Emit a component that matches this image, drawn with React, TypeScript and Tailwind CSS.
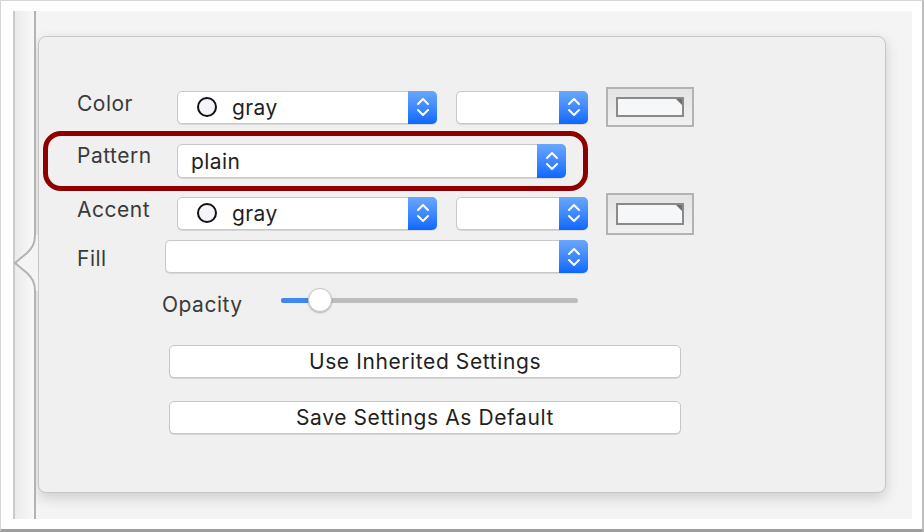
function Chevrons() {
  return (
    <svg width="14" height="22" viewBox="0 0 14 22" fill="none" stroke="white" strokeWidth="2" strokeLinecap="round" strokeLinejoin="round">
      <path d="M2 8 L7 3 L12 8" />
      <path d="M2 14 L7 19 L12 14" />
    </svg>
  )
}

function PopUp({ className, children }: { className: string; children?: React.ReactNode }) {
  return (
    <div className={"flex items-stretch rounded-[5px] border border-[#c8c8c8] bg-white shadow-[0_1px_0_rgba(0,0,0,0.1)] " + className}>
      <div className="flex flex-1 items-center text-[21px] tracking-[0.4px] text-[#1f1f1f]">{children}</div>
      <div className="-my-px -mr-px flex w-[29px] items-center justify-center rounded-r-[5px] bg-linear-to-b from-[#69a7fd] to-[#0a67fe]">
        <Chevrons />
      </div>
    </div>
  )
}

function GraySwatch() {
  return (
    <>
      <span className="ml-[19px] h-[20px] w-[20px] shrink-0 rounded-full border-2 border-[#111] bg-[#f3f5f8]" />
      <span className="ml-[15px] leading-none">gray</span>
    </>
  )
}

function ColorWell({ tall }: { tall?: boolean }) {
  return (
    <div
      className={
        tall
          ? "ml-[18px] flex h-[42px] w-[88px] items-center justify-center border-2 border-[#b3b3b3] bg-linear-to-b from-[#e4e4e4] to-[#f0f0f0]"
          : "ml-[18px] flex h-[40px] w-[88px] items-center justify-center border-2 border-[#b3b3b3] bg-linear-to-b from-[#e4e4e4] to-[#f0f0f0]"
      }
    >
      <div className={tall ? "relative h-[22px] w-[68px] border-2 border-[#8a8a8a] bg-[#f6f7f9]" : "relative h-[20px] w-[68px] border-2 border-[#8a8a8a] bg-[#f6f7f9]"}>
        <svg className="absolute right-0 top-0" width="6" height="6" viewBox="0 0 6 6">
          <path d="M0 0 L6 0 L6 6 Z" fill="#6f6f6f" />
        </svg>
      </div>
    </div>
  )
}

function PushButton({ label }: { label: string }) {
  return (
    <div className="ml-[130px] flex h-[33px] w-[512px] items-center justify-center rounded-[5px] border border-[#c6c6c6] bg-white text-[21px] tracking-[0.6px] text-[#1f1f1f] shadow-[0_1px_0_rgba(0,0,0,0.1)]">
      {label}
    </div>
  )
}

export default function App() {
  return (
    <div className="h-[532px] w-[924px] overflow-hidden border-t border-r-2 border-b-[3px] border-l border-t-[#d6d6d6] border-r-[#bdbdbd] border-b-[#9e9e9e] border-l-[#d6d6d6] bg-white pt-[10px] pl-[12px] font-['Inter',sans-serif]">
      <div className="flex h-[508px] w-[899px]">
        <div className="relative w-[23px] shrink-0 border-r-2 border-l-2 border-r-[#b3b3b3] border-l-[#cacaca] bg-linear-to-r from-[#ebebeb] to-[#f8f8f8]">
          <svg className="absolute top-[224px] -left-[2px]" width="25" height="56" viewBox="0 0 25 56">
            <path d="M22 0 C22 9 19 13 14 18 L2 28 L14 38 C19 43 22 47 22 56 L25 56 L25 0 Z" fill="#f4f4f4" />
            <path d="M22 0 C22 9 19 13 14 18 L2 28 L14 38 C19 43 22 47 22 56" fill="none" stroke="#b3b3b3" strokeWidth="2" />
          </svg>
        </div>

        <div className="flex-1 bg-[#f4f4f4] pt-[25px] pl-[2px]">
          <div className="flex h-[457px] w-[848px] flex-col rounded-[8px] border border-[#c6c6c6] bg-[#f0f0f0] text-[21px] tracking-[0.5px] text-[#3a3a3a] shadow-[0_5px_14px_rgba(0,0,0,0.16)]">
            <div className="mt-[50px] flex h-[40px] items-center">
              <span className="relative -top-[3px] ml-[38px] w-[100px]">Color</span>
              <PopUp className="h-[33px] w-[260px]">
                <GraySwatch />
              </PopUp>
              <PopUp className="ml-[19px] h-[33px] w-[132px]" />
              <ColorWell />
            </div>

            <div className="mt-[4px] ml-[4px] flex h-[60px] w-[545px] items-center rounded-[18px] border-[5px] border-[#8e0000] pl-[29px]">
              <span className="relative -top-[5px] w-[100px]">Pattern</span>
              <PopUp className="h-[34px] w-[389px]">
                <span className="ml-[13px] leading-none">plain</span>
              </PopUp>
            </div>

            <div className="mt-[2px] flex h-[42px] items-center">
              <span className="relative -top-[4px] ml-[38px] w-[100px]">Accent</span>
              <PopUp className="relative -top-[1px] h-[33px] w-[260px]">
                <GraySwatch />
              </PopUp>
              <PopUp className="relative -top-[1px] ml-[19px] h-[33px] w-[132px]" />
              <ColorWell tall />
            </div>

            <div className="mt-[5px] flex h-[33px] items-center">
              <span className="relative top-[2px] ml-[38px] w-[88px]">Fill</span>
              <PopUp className="h-[33px] w-[423px]" />
            </div>

            <div className="mt-[15px] flex h-[24px] items-center">
              <span className="relative top-[5px] ml-[123px] w-[119px]">Opacity</span>
              <div className="relative flex h-[24px] w-[297px] items-center">
                <div className="h-[5px] w-full rounded-full bg-[#bdbdbd]">
                  <div className="h-[5px] w-[30px] rounded-l-full bg-[#3d87f6]" />
                </div>
                <div className="absolute top-0 left-[27px] h-[24px] w-[24px] rounded-full border border-[#c4c4c4] bg-white shadow-[0_1px_2px_rgba(0,0,0,0.25)]" />
              </div>
            </div>

            <div className="mt-[33px]">
              <PushButton label="Use Inherited Settings" />
            </div>
            <div className="mt-[23px]">
              <PushButton label="Save Settings As Default" />
            </div>
          </div>
        </div>
      </div>
    </div>
  )
}
